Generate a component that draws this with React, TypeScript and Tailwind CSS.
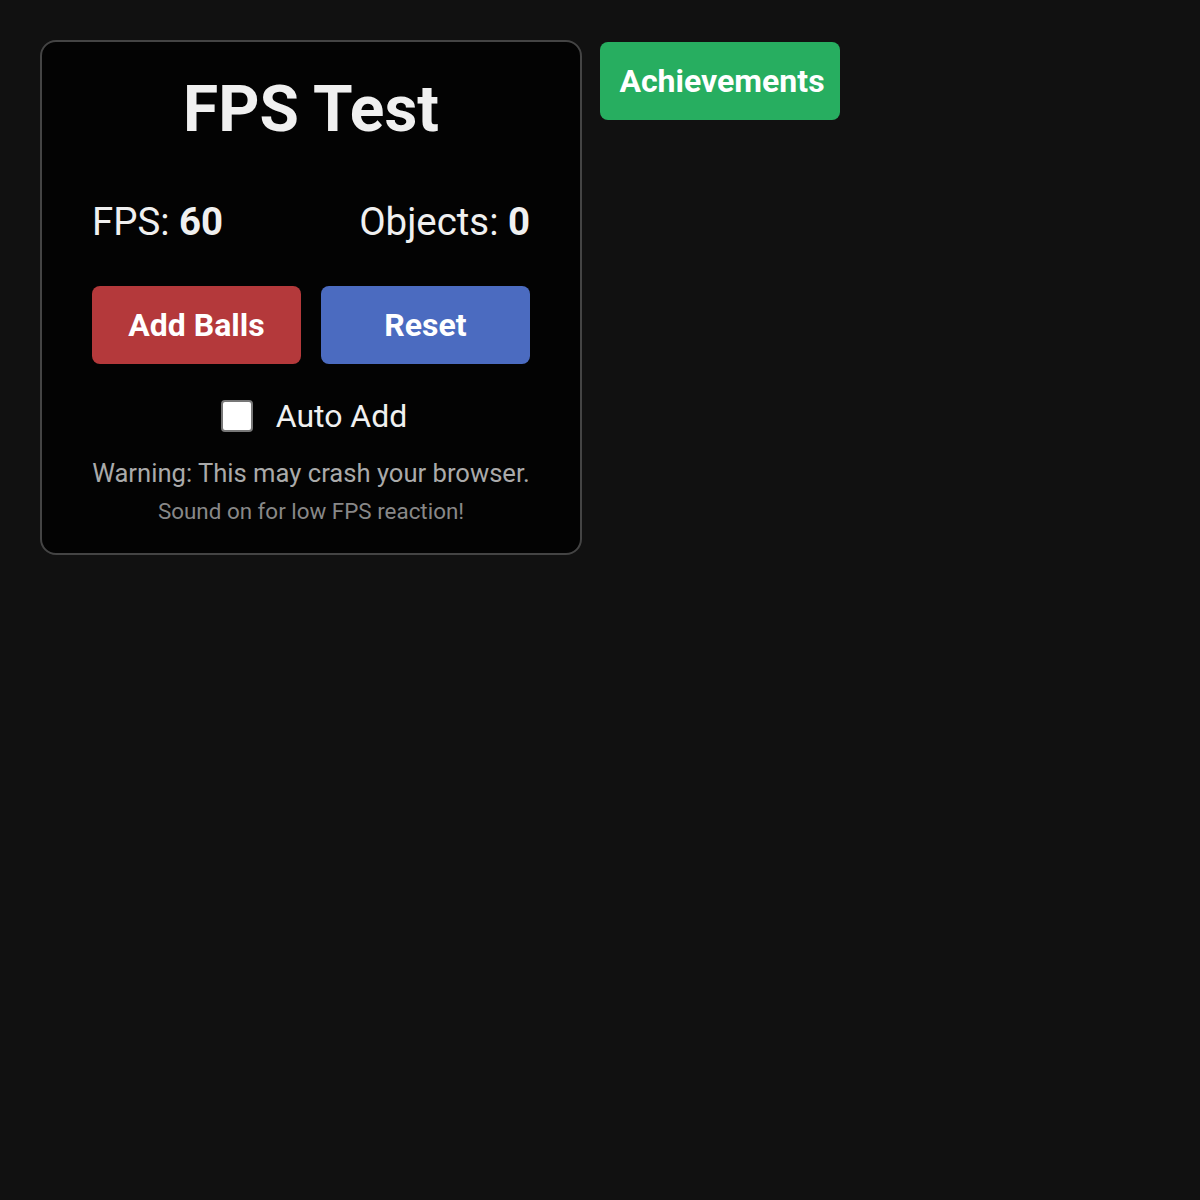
import { useState } from 'react';

export default function App() {
  const [autoAdd, setAutoAdd] = useState(false);

  return (
    <div className="min-h-screen bg-[#111111] p-10 font-['Roboto',sans-serif]">
      <div className="flex items-start gap-[18px]">
        <div className="w-[542px] rounded-2xl border-2 border-[#444444] bg-[#030303] px-[50px] pt-[36px] pb-[31px] text-[#f0f0f0]">
          <h1 className="text-center text-[64px] font-bold leading-[64px]">FPS Test</h1>

          <div className="mt-[61px] flex justify-between text-[38.4px] leading-[38px]">
            <span>
              FPS: <span className="font-bold">60</span>
            </span>
            <span>
              Objects: <span className="font-bold">0</span>
            </span>
          </div>

          <div className="mt-[45px] flex gap-5">
            <button className="h-[78px] flex-1 rounded-lg bg-[#b4393b] text-[32px] font-bold text-white">
              Add Balls
            </button>
            <button className="h-[78px] flex-1 rounded-lg bg-[#4b6bc0] text-[32px] font-bold text-white">
              Reset
            </button>
          </div>

          <label className="mt-9 flex items-center justify-center gap-[23px] pl-[6px] text-[32px] leading-[32px]">
            <input
              type="checkbox"
              checked={autoAdd}
              onChange={(e) => setAutoAdd(e.target.checked)}
              className="h-8 w-8 appearance-none rounded-[4px] border-2 border-[#777777] bg-white"
            />
            <span>Auto Add</span>
          </label>

          <p className="mt-[28px] text-center text-[25.6px] leading-[26px] text-[#aaaaaa]">
            Warning: This may crash your browser.
          </p>
          <p className="mt-[14px] text-center text-[22.4px] leading-[22px] text-[#888888]">
            Sound on for low FPS reaction!
          </p>
        </div>

        <button className="mt-[2px] h-[78px] w-[240px] rounded-lg bg-[#27ae60] pl-[4px] text-[32px] font-bold text-white">
          Achievements
        </button>
      </div>
    </div>
  );
}
